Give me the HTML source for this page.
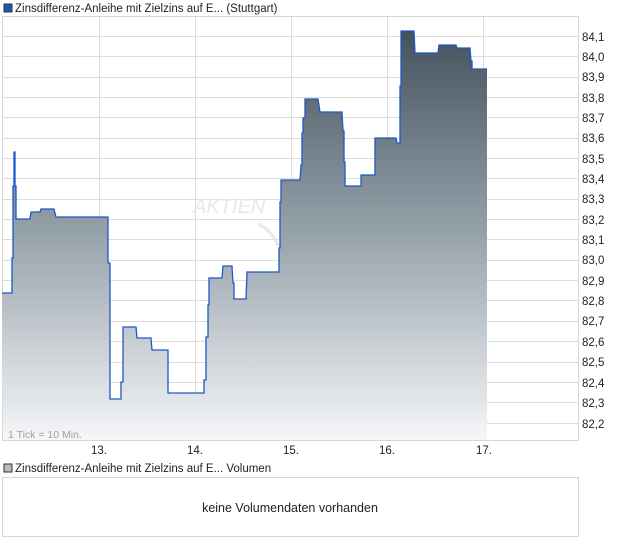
<!DOCTYPE html>
<html><head><meta charset="utf-8"><style>
html,body{margin:0;padding:0;background:#fff;width:620px;height:546px;overflow:hidden;font-family:"Liberation Sans",Arial,sans-serif;}
</style></head><body>
<svg width="620" height="546" xmlns="http://www.w3.org/2000/svg" style="position:absolute;left:0;top:0;font-family:'Liberation Sans',Arial,sans-serif">
<defs>
<linearGradient id="g" x1="0" y1="31" x2="0" y2="440" gradientUnits="userSpaceOnUse">
<stop offset="0" stop-color="#44525d"/>
<stop offset="0.5" stop-color="#97a3ab"/>
<stop offset="1" stop-color="#f5f6f8"/>
</linearGradient>
</defs>
<rect x="4" y="4" width="8" height="8" fill="#1f57b8" stroke="#333" stroke-width="1"/>
<text x="15" y="12" font-size="11.5" fill="#222">Zinsdifferenz-Anleihe mit Zielzins auf E... (Stuttgart)</text>
<rect x="2.5" y="16.5" width="576" height="424" fill="#fff" stroke="#d6d6d6"/>
<g stroke="#dcdcdc" stroke-width="1">
<line x1="3" x2="578" y1="36.5" y2="36.5"/><line x1="3" x2="578" y1="56.5" y2="56.5"/>
<line x1="3" x2="578" y1="77.5" y2="77.5"/><line x1="3" x2="578" y1="97.5" y2="97.5"/>
<line x1="3" x2="578" y1="117.5" y2="117.5"/><line x1="3" x2="578" y1="138.5" y2="138.5"/>
<line x1="3" x2="578" y1="158.5" y2="158.5"/><line x1="3" x2="578" y1="178.5" y2="178.5"/>
<line x1="3" x2="578" y1="199.5" y2="199.5"/><line x1="3" x2="578" y1="219.5" y2="219.5"/>
<line x1="3" x2="578" y1="239.5" y2="239.5"/><line x1="3" x2="578" y1="260.5" y2="260.5"/>
<line x1="3" x2="578" y1="280.5" y2="280.5"/><line x1="3" x2="578" y1="300.5" y2="300.5"/>
<line x1="3" x2="578" y1="321.5" y2="321.5"/><line x1="3" x2="578" y1="341.5" y2="341.5"/>
<line x1="3" x2="578" y1="362.5" y2="362.5"/><line x1="3" x2="578" y1="382.5" y2="382.5"/>
<line x1="3" x2="578" y1="402.5" y2="402.5"/><line x1="3" x2="578" y1="423.5" y2="423.5"/>
<line x1="99.5" x2="99.5" y1="17" y2="440"/><line x1="195.5" x2="195.5" y1="17" y2="440"/>
<line x1="291.5" x2="291.5" y1="17" y2="440"/><line x1="387.5" x2="387.5" y1="17" y2="440"/>
<line x1="483.5" x2="483.5" y1="17" y2="440"/>
</g>
<text x="193" y="213" font-size="20" font-style="italic" fill="#ebe7e2">AKTIEN</text>
<path d="M258 224 Q272 230 278 246" stroke="#ebe7e2" stroke-width="3" fill="none"/>
<path id="p" d="M2 293 L12 293 L12 258 L13 258 L13 186 L14 186 L14 152 L15 152 L15 186 L16 186 L16 219 L30 219 L31 212 L40 212 L41 209 L54 209 L56 217 L108 217 L108 263 L110 263 L110 399 L121 399 L121 382 L123 382 L123 327 L136 327 L137 338 L151 338 L152 350 L168 350 L168 393 L204 393 L204 380 L206 380 L206 337 L208 337 L208 305 L209 305 L209 278 L222 278 L223 266 L232 266 L233 283 L234 283 L234 299 L246 299 L247 272 L279 272 L279 248 L280 248 L280 202 L281 202 L281 180 L300 180 L301 165 L302 165 L302 133 L303 133 L303 118 L305 118 L305 99 L318 99 L320 112 L342 112 L343 131 L344 131 L344 162 L345 162 L345 186 L361 186 L361 175 L375 175 L375 138 L396 138 L397 143 L400 143 L400 86 L401 86 L401 31 L414 31 L415 53 L438 53 L439 45 L456 45 L457 48 L470 48 L471 61 L472 61 L472 69 L487 69" fill="none"/>
<path d="M2 293 L12 293 L12 258 L13 258 L13 186 L14 186 L14 152 L15 152 L15 186 L16 186 L16 219 L30 219 L31 212 L40 212 L41 209 L54 209 L56 217 L108 217 L108 263 L110 263 L110 399 L121 399 L121 382 L123 382 L123 327 L136 327 L137 338 L151 338 L152 350 L168 350 L168 393 L204 393 L204 380 L206 380 L206 337 L208 337 L208 305 L209 305 L209 278 L222 278 L223 266 L232 266 L233 283 L234 283 L234 299 L246 299 L247 272 L279 272 L279 248 L280 248 L280 202 L281 202 L281 180 L300 180 L301 165 L302 165 L302 133 L303 133 L303 118 L305 118 L305 99 L318 99 L320 112 L342 112 L343 131 L344 131 L344 162 L345 162 L345 186 L361 186 L361 175 L375 175 L375 138 L396 138 L397 143 L400 143 L400 86 L401 86 L401 31 L414 31 L415 53 L438 53 L439 45 L456 45 L457 48 L470 48 L471 61 L472 61 L472 69 L487 69 L487 440 L3 440 Z" fill="url(#g)"/>
<use href="#p" stroke="#1f57c8" stroke-width="1.3"/>
<text x="8" y="438" font-size="10.5" fill="#a0a0a0">1 Tick = 10 Min.</text>
<g font-size="11.5" fill="#222">
<text x="582" y="41">84,1</text><text x="582" y="61">84,0</text><text x="582" y="81">83,9</text>
<text x="582" y="102">83,8</text><text x="582" y="122">83,7</text><text x="582" y="142">83,6</text>
<text x="582" y="163">83,5</text><text x="582" y="183">83,4</text><text x="582" y="203">83,3</text>
<text x="582" y="224">83,2</text><text x="582" y="244">83,1</text><text x="582" y="264">83,0</text>
<text x="582" y="285">82,9</text><text x="582" y="305">82,8</text><text x="582" y="325">82,7</text>
<text x="582" y="346">82,6</text><text x="582" y="366">82,5</text><text x="582" y="387">82,4</text>
<text x="582" y="407">82,3</text><text x="582" y="428">82,2</text>
</g>
<g font-size="11.5" fill="#222" text-anchor="middle">
<text x="99" y="454">13.</text><text x="195" y="454">14.</text><text x="291" y="454">15.</text>
<text x="387" y="454">16.</text><text x="484" y="454">17.</text>
</g>
<rect x="4" y="464" width="8" height="8" fill="#bbb" stroke="#333" stroke-width="1"/>
<text x="15" y="472" font-size="11.5" fill="#222">Zinsdifferenz-Anleihe mit Zielzins auf E... Volumen</text>
<rect x="2.5" y="477.5" width="576" height="59" fill="#fff" stroke="#d6d6d6"/>
<text x="290" y="512" font-size="12.5" fill="#222" text-anchor="middle">keine Volumendaten vorhanden</text>
</svg>
</body></html>
